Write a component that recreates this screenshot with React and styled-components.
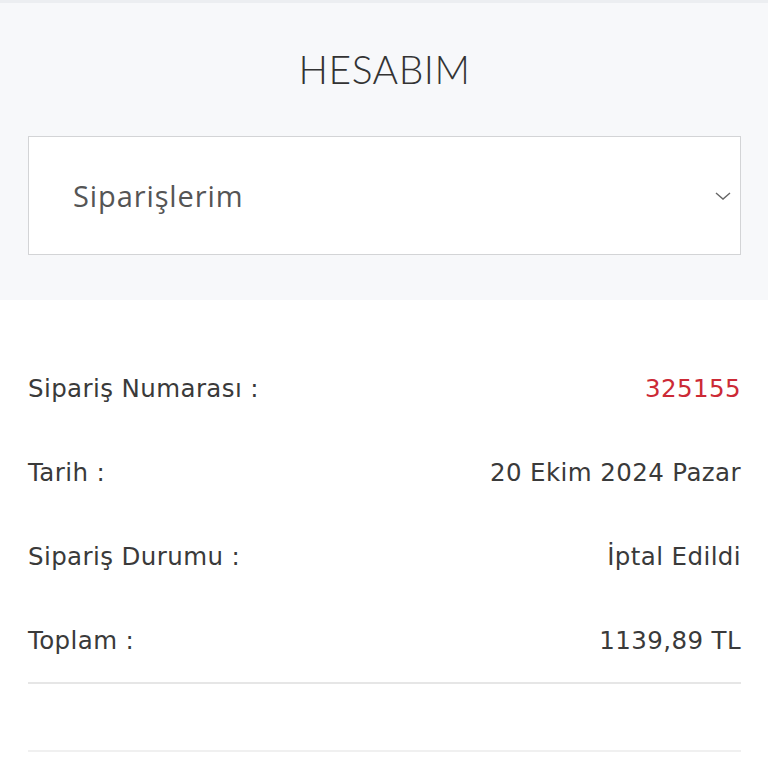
import React from "react";
import styled, { createGlobalStyle } from "styled-components";

const GlobalStyle = createGlobalStyle`
  html, body {
    margin: 0;
    padding: 0;
    background: #fff;
  }
  * {
    box-sizing: border-box;
  }
`;

const Page = styled.div`
  width: 768px;
  min-height: 768px;
  background: #fff;
  overflow: hidden;
`;

const AccountHeader = styled.div`
  background: #f7f8fa;
  border-top: 3px solid #eceef1;
  padding: 0 27px 45px 28px;
`;

const Title = styled.h1`
  margin: 0;
  height: 133px;
  display: flex;
  align-items: center;
  justify-content: center;
  padding-bottom: 2px;
  font-family: Lato, "Open Sans", sans-serif;
  font-weight: 300;
  font-size: 39px;
  letter-spacing: 0.5px;
  color: #333;
`;

const Select = styled.div`
  height: 119px;
  display: flex;
  align-items: center;
  justify-content: space-between;
  padding: 0 8px 0 44px;
  background: #fff;
  border: 1px solid #d3d4d6;

  span {
    font-family: "Open Sans", sans-serif;
    font-weight: 400;
    font-size: 29px;
    letter-spacing: 0.9px;
    color: #555;
  }
`;

const Details = styled.div`
  padding: 46px 27px 0 28px;
`;

const Rows = styled.div`
  border-bottom: 2px solid #e6e6e6;
`;

const Row = styled.div`
  height: 84px;
  display: flex;
  align-items: center;
  justify-content: space-between;
  font-family: "DejaVu Sans", sans-serif;
  font-size: 24.5px;
  letter-spacing: 0.4px;
  color: #3a3a3a;
`;

const Value = styled.span`
  color: ${(p) => (p.$accent ? "#cc2a36" : "#3a3a3a")};
`;

const NextItem = styled.div`
  height: 68px;
  border-bottom: 2px solid #f0f0f0;
`;

const Chevron = () => (
  <svg width="18" height="12" viewBox="0 0 18 12" fill="none">
    <path d="M2 3l7 6 7-6" stroke="#666" strokeWidth="1.4" />
  </svg>
);

const rows = [
  { label: "Sipariş Numarası :", value: "325155", accent: true },
  { label: "Tarih :", value: "20 Ekim 2024 Pazar" },
  { label: "Sipariş Durumu :", value: "İptal Edildi" },
  { label: "Toplam :", value: "1139,89 TL" },
];

export default function App() {
  return (
    <Page>
      <GlobalStyle />
      <AccountHeader>
        <Title>HESABIM</Title>
        <Select>
          <span>Siparişlerim</span>
          <Chevron />
        </Select>
      </AccountHeader>
      <Details>
        <Rows>
          {rows.map((r) => (
            <Row key={r.label}>
              <span>{r.label}</span>
              <Value $accent={r.accent}>{r.value}</Value>
            </Row>
          ))}
        </Rows>
        <NextItem />
      </Details>
    </Page>
  );
}
